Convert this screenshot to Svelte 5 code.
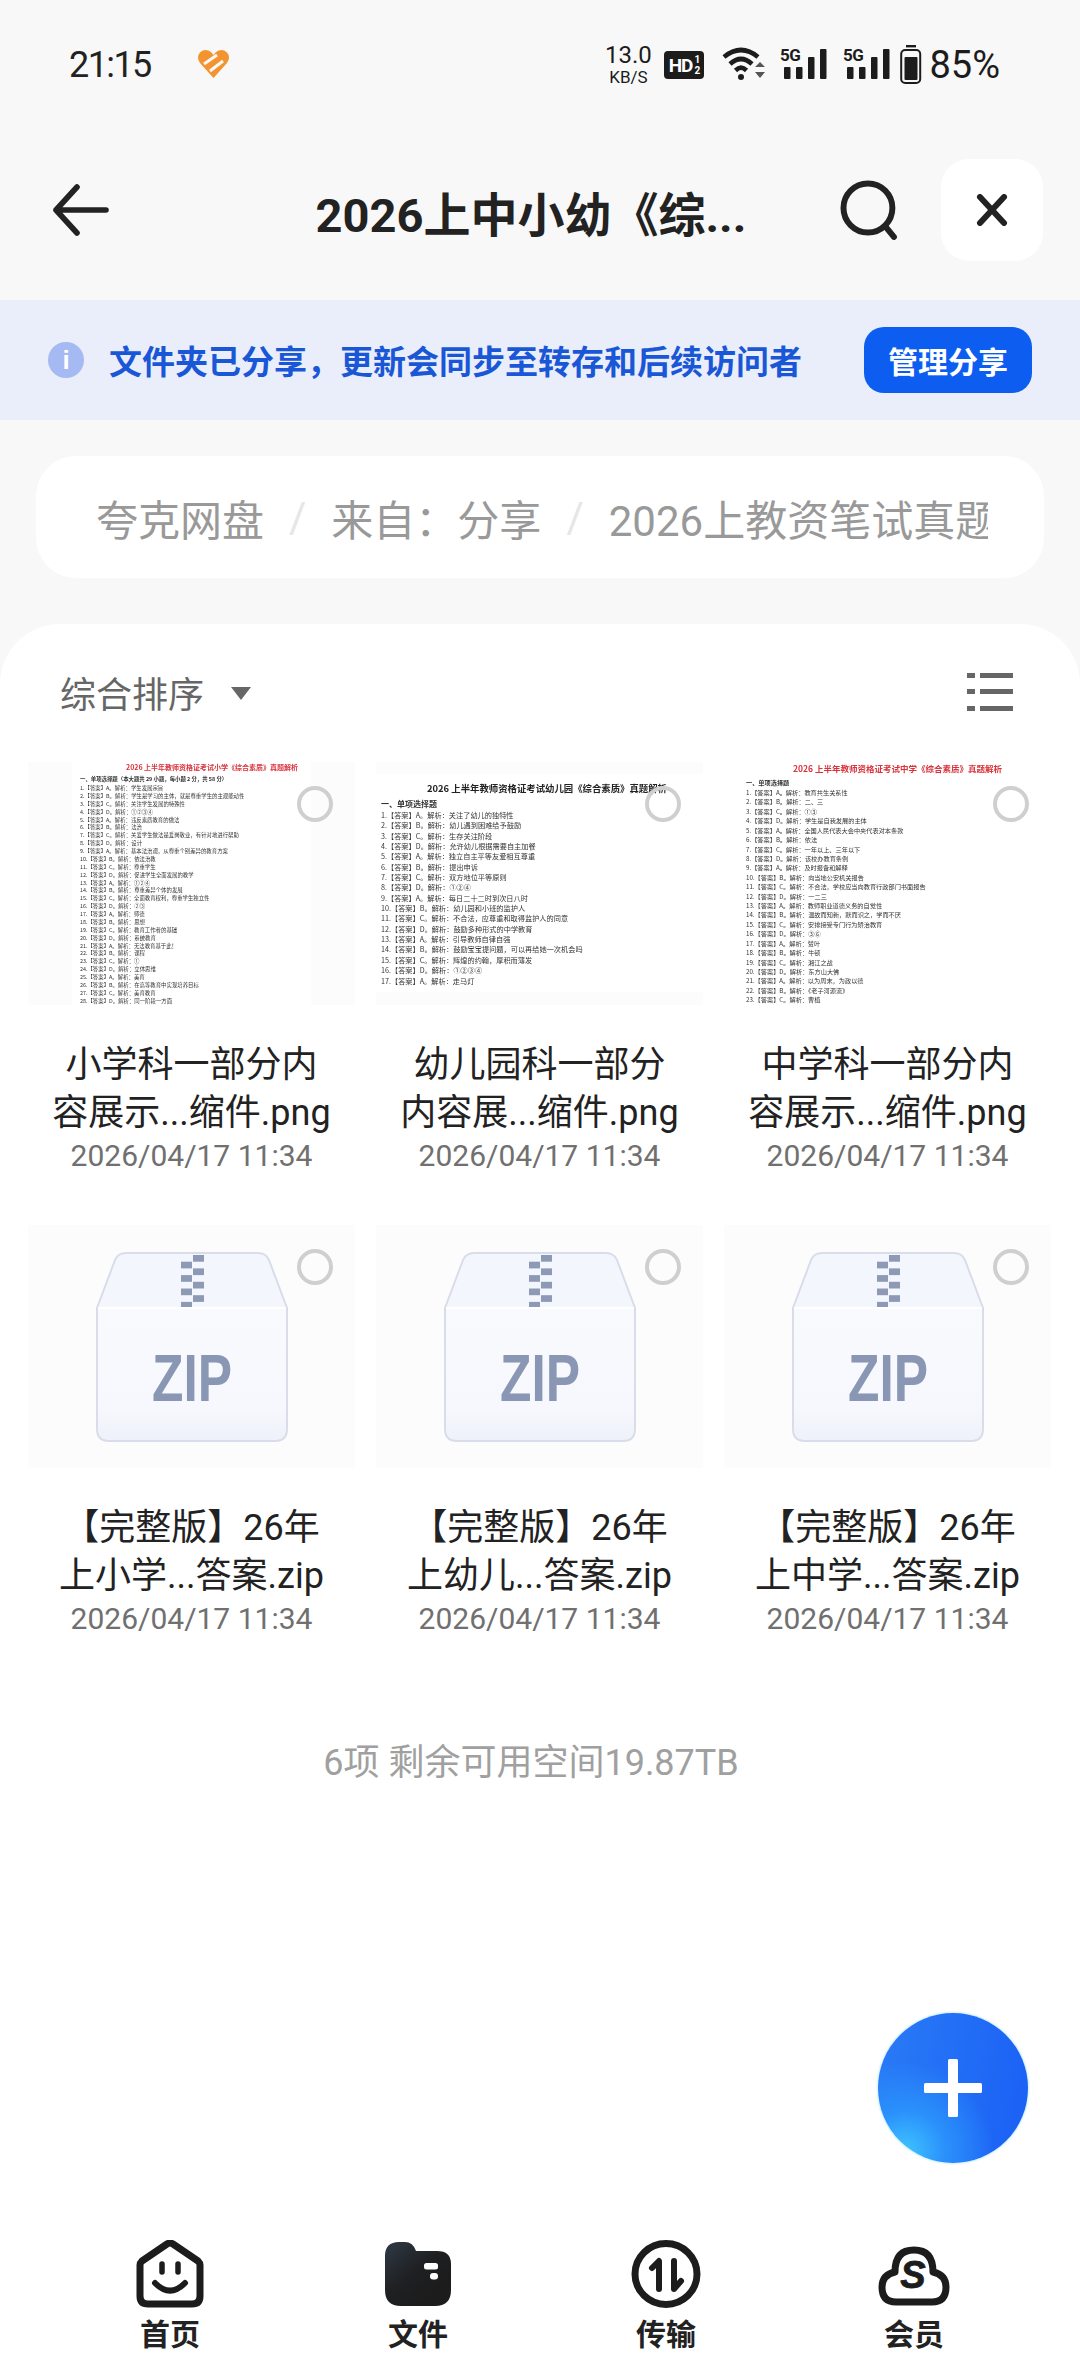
<script>
  const docs = [
    {
      kind: 'a',
      title: '2026 上半年教师资格证考试小学《综合素质》真题解析',
      head: '一、单项选择题（本大题共 29 小题，每小题 2 分，共 58 分）',
      lines: ['学生发展宗旨','学生是学习的主体，就是尊重学生的主观能动性','关注学生发展的特殊性','①②③④','违反素质教育的做法','法治','关爱学生做法是爱岗敬业，有针对地进行帮助','设计','基本法治观，从尊重个别差异的教育方案','依法治教','尊重学生','促进学生全面发展的教学','①②④','尊重差异个体的发展','全面教育权利，尊重学生独立性','②③','师德','思想','教育工作者的基础','系统教育','无法教育基于此！','课程','①','立体思维','美育','在高等教育中实现培养目标','美育教育','同一阶段一方面']
    },
    {
      kind: 'b',
      title: '2026 上半年教师资格证考试幼儿园《综合素质》真题解析',
      head: '一、单项选择题',
      lines: ['关注了幼儿的独特性','幼儿遇到困难给予鼓励','生存关注阶段','允许幼儿根据需要自主加餐','独立自主平等友爱相互尊重','提出申诉','双方地位平等原则','①②④','每日二十二时到次日八时','幼儿园和小班的监护人','不合法，应尊重和取得监护人的同意','鼓励多种形式的中学教育','引导教师自律自强','鼓励宝宝提问题，可以再给她一次机会吗','辉煌的约翰，厚积而薄发','①②③④','走马灯']
    },
    {
      kind: 'c',
      title: '2026 上半年教师资格证考试中学《综合素质》真题解析',
      head: '一、单项选择题',
      lines: ['教育共生关系性','二、三','①③','学生是自我发展的主体','全国人民代表大会中央代表对本条款','依法','一年以上、三年以下','该校办教育条例','及时报备和解释','向当地公安机关报告','不合法，学校应当向教育行政部门书面报告','一二三','教师职业道德义务的自觉性','温故而知新，默而识之，学而不厌','安排接受专门行为矫治教育','③⑥','赞叶','牛顿','湘江之战','东方山大佛','以为周末，为政以德','《老子河源流》','曹植']
    }
  ]

  const files = [
    { doc: docs[0], one: '小学科一部分内', two: '容展示...缩件.png' },
    { doc: docs[1], one: '幼儿园科一部分', two: '内容展...缩件.png' },
    { doc: docs[2], one: '中学科一部分内', two: '容展示...缩件.png' },
    { one: '【完整版】26年', two: '上小学...答案.zip' },
    { one: '【完整版】26年', two: '上幼儿...答案.zip' },
    { one: '【完整版】26年', two: '上中学...答案.zip' }
  ]

  const stamp = '2026/04/17 11:34'
  const zipRows = [0, 1, 2, 3, 4, 5, 6, 7]
</script>

<div class="page">
  <div class="status">
    <span class="clock">21:15</span>
    <svg class="health" width="33" height="30" viewBox="0 0 33 30">
      <path d="M16.5 29 L3 14 Q-1 8 3 3.5 Q8 -1 14 3 L16.5 6 L19 3 Q25 -1 30 3.5 Q34 8 30 14Z" fill="#f49430" />
      <path d="M7 15 L20 6 M13 22 L26 12" stroke="#f8f8f8" stroke-width="3" />
    </svg>
    <div class="spring"></div>
    <div class="speed"><b>13.0</b><i>KB/S</i></div>
    <div class="hd"><span>HD</span><small>1<br />2</small></div>
    <svg class="wifi" width="45" height="34" viewBox="0 0 45 34" fill="none" stroke="#1c1c1c" stroke-width="4.6">
      <path d="M2 10 Q19 -4 36 10" />
      <path d="M8 17 Q19 7 30 17" />
      <path d="M13.5 23.5 Q19 18 24.5 23.5" />
      <circle cx="19" cy="30" r="3" fill="#1c1c1c" stroke="none" />
      <path d="M33 20 L38 15 L43 20Z M33 25 L43 25 L38 31Z" fill="#555" stroke="none" />
    </svg>
    {#each [0, 1] as sim}
      <svg class="signal" width="47" height="34" viewBox="0 0 47 34" fill="#1c1c1c">
        <text x="0" y="15" class="fiveg">5G</text>
        <rect x="4" y="21" width="6.5" height="12" rx="1" />
        <rect x="16" y="21" width="6.5" height="12" rx="1" />
        <rect x="28" y="11" width="6.5" height="22" rx="1" />
        <rect x="40" y="3" width="6.5" height="30" rx="1" />
      </svg>
    {/each}
    <svg class="battery" width="22" height="39" viewBox="0 0 22 39">
      <rect x="6" y="0" width="10" height="2.4" fill="#1c1c1c" />
      <rect x="1.2" y="5" width="19" height="33" rx="4" fill="none" stroke="#1c1c1c" stroke-width="2" />
      <rect x="4.5" y="12" width="13" height="23" rx="1" fill="#1c1c1c" />
    </svg>
    <span class="pct">85%</span>
  </div>

  <header class="bar">
    <div class="back">
      <svg width="58" height="52" viewBox="0 0 58 52" fill="none" stroke="#222" stroke-width="5.6" stroke-linecap="round" stroke-linejoin="round">
        <path d="M25 3 L4 26 L25 49 M4 26 H54" />
      </svg>
    </div>
    <h1>2026上中小幼《综...</h1>
    <svg class="search" width="60" height="62" viewBox="0 0 60 62" fill="none" stroke="#222" stroke-width="6">
      <circle cx="28" cy="29" r="24.5" />
      <path d="M45 47 L54 58" stroke-linecap="round" />
    </svg>
    <button class="close" aria-label="关闭">
      <svg width="32" height="32" viewBox="0 0 32 32" fill="none" stroke="#222" stroke-width="6" stroke-linecap="round">
        <path d="M4 3 L28 29 M28 3 L4 29" />
      </svg>
    </button>
  </header>

  <div class="notice">
    <span class="info">i</span>
    <span class="notice-text">文件夹已分享，更新会同步至转存和后续访问者</span>
    <button class="manage">管理分享</button>
  </div>

  <nav class="crumbs">
    <div class="crumb-track">
      <span>夸克网盘</span>
      <em>/</em>
      <span>来自：分享</span>
      <em>/</em>
      <span>2026上教资笔试真题</span>
    </div>
  </nav>

  <main class="panel">
    <div class="sort">
      <span class="sort-label">综合排序</span>
      <span class="caret"></span>
      <svg class="list-toggle" width="46" height="38" viewBox="0 0 46 38" fill="#666">
        <rect x="0" y="0" width="8" height="5" /><rect x="13" y="0" width="33" height="5" />
        <rect x="0" y="16" width="8" height="5" /><rect x="13" y="16" width="33" height="5" />
        <rect x="0" y="33" width="8" height="5" /><rect x="13" y="33" width="33" height="5" />
      </svg>
    </div>

    <div class="grid">
      {#each files as f}
        <div class="file">
          <div class="thumb">
            {#if f.doc}
              <div class="doc {f.doc.kind}">
                <div class="doc-title">{f.doc.title}</div>
                <div class="doc-head">{f.doc.head}</div>
                {#each f.doc.lines as line, i}
                  <div class="doc-line">{i + 1}.【答案】{'ABCD'[i % 4]}。解析：{line}</div>
                {/each}
              </div>
            {:else}
              <svg class="zip" width="192" height="192" viewBox="0 0 192 192">
                <defs>
                  <linearGradient id="zipbody" x1="0" y1="0" x2="0" y2="1">
                    <stop offset="0" stop-color="#f8fafe" />
                    <stop offset="0.75" stop-color="#f6f8fd" />
                    <stop offset="1" stop-color="#eef1f9" />
                  </linearGradient>
                </defs>
                <path d="M1 57 L19 9 Q22 2 30 2 H162 Q170 2 173 9 L191 57Z" fill="#f3f6fc" stroke="#d8dde9" stroke-width="2" />
                {#each zipRows as r}
                  <rect x={r % 2 ? 85 : 97} y={4 + r * 6.7} width="11" height="6.7" fill="#8d99b5" />
                {/each}
                <path d="M1 57 H191 V178 Q191 190 179 190 H13 Q1 190 1 178Z" fill="url(#zipbody)" stroke="#d8dde9" stroke-width="2" />
                <path d="M2 57 H190" stroke="#fff" stroke-width="2" />
                <text x="96" y="150" class="zip-word" textLength="80" lengthAdjust="spacingAndGlyphs">ZIP</text>
              </svg>
            {/if}
            <span class="radio"></span>
          </div>
          <div class="name">{f.one}</div>
          <div class="name">{f.two}</div>
          <div class="stamp">{stamp}</div>
        </div>
      {/each}
    </div>

    <div class="summary">6项 剩余可用空间19.87TB</div>

    <button class="fab" aria-label="新建">
      <svg width="58" height="58" viewBox="0 0 58 58" fill="#fff">
        <rect x="24" y="0" width="10" height="58" rx="1.5" />
        <rect x="0" y="24" width="58" height="10" rx="1.5" />
      </svg>
    </button>

    <footer class="tabs">
      <div class="tab">
        <svg width="68" height="68" viewBox="0 0 68 68" fill="none" stroke="#1c1c1c">
          <path d="M4 25 Q4 23 6 21 L31 4 Q34 2 37 4 L62 21 Q64 23 64 25 V56 Q64 64 56 64 H12 Q4 64 4 56Z" stroke-width="7" stroke-linejoin="round" />
          <path d="M26 24 V32 M42 24 V32" stroke-width="5.5" stroke-linecap="round" />
          <path d="M19 43 Q34 58 49 43" stroke-width="6" stroke-linecap="round" />
        </svg>
        <span>首页</span>
      </div>
      <div class="tab">
        <svg width="68" height="68" viewBox="0 0 68 68">
          <defs>
            <linearGradient id="folder" x1="0" y1="0" x2="0.7" y2="0.8">
              <stop offset="0" stop-color="#2f3a46" />
              <stop offset="0.6" stop-color="#1f2022" />
              <stop offset="1" stop-color="#1c1c1c" />
            </linearGradient>
          </defs>
          <path d="M1 16 Q1 2 15 2 H21 Q29 2 32 11 H53 Q67 11 67 24 V50 Q67 66 51 66 H17 Q1 66 1 50Z" fill="url(#folder)" />
          <rect x="40" y="23" width="14" height="6.5" rx="2.5" fill="#fff" />
          <rect x="46" y="33" width="8" height="6.5" rx="3" fill="#fff" />
        </svg>
        <span>文件</span>
      </div>
      <div class="tab">
        <svg width="70" height="68" viewBox="0 0 70 68" fill="none" stroke="#1c1c1c" stroke-linecap="round" stroke-linejoin="round">
          <ellipse cx="35" cy="34" rx="31" ry="30.5" stroke-width="7" />
          <path d="M21 28 L28 21 V49" stroke-width="6" />
          <path d="M43 21 V49 L50 41" stroke-width="6" />
        </svg>
        <span>传输</span>
      </div>
      <div class="tab">
        <svg width="72" height="68" viewBox="0 0 72 68" fill="none" stroke="#1c1c1c">
          <path d="M18 62 H54 Q68 62 68 47 Q68 35 55 32 Q55 10 36 10 Q17 10 17 32 Q4 35 4 47 Q4 62 18 62Z" stroke-width="7" stroke-linejoin="round" />
          <text x="35" y="48" class="vip">S</text>
        </svg>
        <span>会员</span>
      </div>
    </footer>
  </main>
</div>

<style>
  :global(body) {
    margin: 0;
    background: #f8f8f8;
  }
  .page {
    width: 1080px;
    height: 2376px;
    display: flex;
    flex-direction: column;
    overflow: hidden;
    background: #f8f8f8;
    color: #222;
    font-family: Roboto, "Noto Sans CJK SC", sans-serif;
  }
  .status {
    height: 125px;
    box-sizing: border-box;
    padding: 44px 80px 0 69px;
    display: flex;
    align-items: flex-start;
  }
  .clock {
    font-size: 36px;
    line-height: 42px;
    letter-spacing: -1.6px;
    color: #222;
  }
  .health {
    margin: 5px 0 0 46px;
  }
  .spring {
    flex: 1;
  }
  .speed {
    width: 46px;
    display: flex;
    flex-direction: column;
    align-items: center;
    margin-top: -3px;
    color: #1c1c1c;
  }
  .speed b {
    font-weight: 400;
    font-size: 24px;
    line-height: 28px;
  }
  .speed i {
    font-style: normal;
    font-size: 17px;
    line-height: 16px;
  }
  .hd {
    margin: 7px 0 0 13px;
    width: 40px;
    height: 28px;
    border-radius: 4px;
    background: #1c1c1c;
    color: #fff;
    display: flex;
    align-items: center;
    justify-content: center;
    font-weight: 700;
    font-size: 19px;
    letter-spacing: -1px;
  }
  .hd small {
    font-size: 10px;
    line-height: 11px;
    margin-left: 2px;
    letter-spacing: 0;
  }
  .wifi {
    margin: 3px 0 0 18px;
  }
  .signal {
    margin: 2px 0 0 13px;
  }
  .signal + .signal {
    margin-left: 16px;
  }
  .fiveg {
    font-size: 17px;
    font-weight: 700;
    letter-spacing: -0.5px;
    font-family: Roboto, sans-serif;
  }
  .battery {
    margin: 1px 0 0 10px;
  }
  .pct {
    font-size: 38px;
    line-height: 44px;
    margin: -1px 0 0 7px;
    color: #1c1c1c;
  }
  .bar {
    height: 170px;
    margin-bottom: 5px;
    display: flex;
    align-items: center;
    padding: 0 37px 0 0;
  }
  .back {
    width: 222px;
    box-sizing: border-box;
    padding: 0 0 0 52px;
    display: flex;
  }
  .bar h1 {
    width: 620px;
    margin: 0;
    padding-top: 3px;
    text-align: center;
    font-size: 47px;
    font-weight: 700;
    white-space: nowrap;
    color: #222;
  }
  .search {
    margin: 0;
  }
  .close {
    margin-left: 41px;
    width: 102px;
    height: 102px;
    border: 0;
    border-radius: 28px;
    background: #fff;
    padding: 0;
    display: flex;
    align-items: center;
    justify-content: center;
  }
  .notice {
    height: 120px;
    background: #e9eefa;
    display: flex;
    align-items: center;
    padding: 0 48px;
  }
  .info {
    width: 36px;
    height: 36px;
    border-radius: 50%;
    background: #a5b9f3;
    color: #fff;
    font-size: 26px;
    font-weight: 700;
    line-height: 36px;
    text-align: center;
    font-family: "Liberation Sans", sans-serif;
  }
  .notice-text {
    margin-left: 25px;
    font-size: 33px;
    font-weight: 700;
    color: #1a57d6;
    white-space: nowrap;
    flex: 1;
  }
  .manage {
    width: 168px;
    height: 66px;
    border: 0;
    border-radius: 20px;
    background: #0c5df0;
    color: #fff;
    font: 700 30px "Noto Sans CJK SC", sans-serif;
    padding: 0;
  }
  .crumbs {
    margin: 36px 36px 0;
    height: 122px;
    border-radius: 40px;
    background: #fff;
    box-sizing: border-box;
    padding: 0 56px 0 60px;
    display: flex;
    align-items: center;
    overflow: hidden;
  }
  .crumb-track {
    display: flex;
    align-items: center;
    gap: 25px;
    overflow: hidden;
    white-space: nowrap;
    font-size: 42px;
    color: #999;
  }
  .crumb-track em {
    font-style: normal;
    color: #e6e6e6;
  }
  .panel {
    position: relative;
    flex: 1;
    margin-top: 46px;
    background: #fff;
    border-radius: 60px 60px 0 0;
    display: flex;
    flex-direction: column;
  }
  .sort {
    height: 136px;
    padding: 0 67px 2px 60px;
    display: flex;
    align-items: center;
  }
  .sort-label {
    font-size: 36px;
    color: #666;
  }
  .caret {
    margin: 2px 0 0 27px;
    width: 0;
    height: 0;
    border-style: solid;
    border-width: 13px 10px 0;
    border-color: #666 transparent transparent;
  }
  .list-toggle {
    margin-left: auto;
  }
  .grid {
    display: grid;
    grid-template-columns: repeat(3, 327px);
    column-gap: 21px;
    row-gap: 50px;
    padding-left: 28px;
  }
  .file {
    display: flex;
    flex-direction: column;
    align-items: center;
  }
  .thumb {
    position: relative;
    width: 100%;
    height: 243px;
    margin-bottom: 36px;
    background: #fcfcfd;
    overflow: hidden;
    display: flex;
    align-items: center;
    justify-content: center;
  }
  .radio {
    position: absolute;
    top: 24px;
    right: 22px;
    width: 36px;
    height: 36px;
    box-sizing: border-box;
    border: 4px solid #cfcfcf;
    border-radius: 50%;
  }
  .doc {
    align-self: flex-start;
    box-sizing: border-box;
    width: 100%;
    color: #333;
    filter: blur(0.5px);
    font-family: "Noto Sans CJK SC", sans-serif;
    white-space: nowrap;
  }
  .doc-title {
    text-align: center;
    font-weight: 700;
  }
  .doc-head {
    font-weight: 700;
  }
  .doc.a {
    width: 239px;
    height: 243px;
    padding: 0 8px 0 8px;
    background: #fff;
    font-size: 5.4px;
    line-height: 7.87px;
  }
  .doc.a .doc-title {
    font-size: 7px;
    line-height: 10px;
    color: #d8333c;
    padding-left: 46px;
    text-align: left;
  }
  .doc.a .doc-head {
    line-height: 12px;
    margin-top: 1px;
  }
  .doc.b {
    height: 218px;
    margin-top: 12px;
    padding: 0 0 0 5px;
    background: #fff;
    font-size: 7.2px;
    line-height: 10.35px;
  }
  .doc.b .doc-title {
    font-size: 9.4px;
    line-height: 14px;
    color: #222;
    margin: 7px 0 0 0;
    padding-left: 46px;
    text-align: left;
  }
  .doc.b .doc-head {
    font-size: 8px;
    line-height: 12px;
    margin-top: 3px;
  }
  .doc.c {
    height: 243px;
    padding: 0 0 0 22px;
    background: #fff;
    font-size: 6.2px;
    line-height: 9.42px;
  }
  .doc.c .doc-title {
    font-size: 8.5px;
    line-height: 12px;
    color: #d8333c;
    text-align: left;
    padding-left: 47px;
  }
  .doc.c .doc-head {
    line-height: 11px;
    margin-top: 3px;
  }
  .zip-word {
    font: 700 66px "Liberation Sans", sans-serif;
    fill: #8a97b4;
    text-anchor: middle;
  }
  .name {
    font-size: 36px;
    line-height: 48px;
    color: #222;
    white-space: nowrap;
  }
  .stamp {
    font-size: 30px;
    line-height: 38px;
    color: #707070;
    white-space: nowrap;
  }
  .summary {
    margin-top: 102px;
    padding-right: 18px;
    text-align: center;
    font-size: 36px;
    line-height: 46px;
    color: #a0a0a0;
    white-space: nowrap;
  }
  .fab {
    position: absolute;
    left: 878px;
    top: 1389px;
    width: 150px;
    height: 150px;
    padding: 0;
    border: 0;
    border-radius: 50%;
    display: flex;
    align-items: center;
    justify-content: center;
    background: radial-gradient(circle at 18% 92%, #3fc3ff 0%, #2a90fb 22%, rgba(29, 102, 245, 0) 48%), linear-gradient(100deg, #2a7bf6, #1a60f5);
    box-shadow: 0 0 3px #8fdcff;
  }
  .tabs {
    margin-top: auto;
    height: 136px;
    box-sizing: border-box;
    padding: 0 42px 0 46px;
    display: grid;
    grid-template-columns: repeat(4, 248px);
  }
  .tab {
    display: flex;
    flex-direction: column;
    align-items: center;
    font-size: 30px;
    font-weight: 700;
    color: #222;
    font-family: "Noto Sans CJK SC", sans-serif;
  }
  .tab span {
    line-height: 40px;
    margin-top: 4px;
  }
  .vip {
    font: italic 700 38px "Liberation Sans", sans-serif;
    fill: #1c1c1c;
    stroke: #1c1c1c;
    stroke-width: 0.8px;
    text-anchor: middle;
  }
</style>
